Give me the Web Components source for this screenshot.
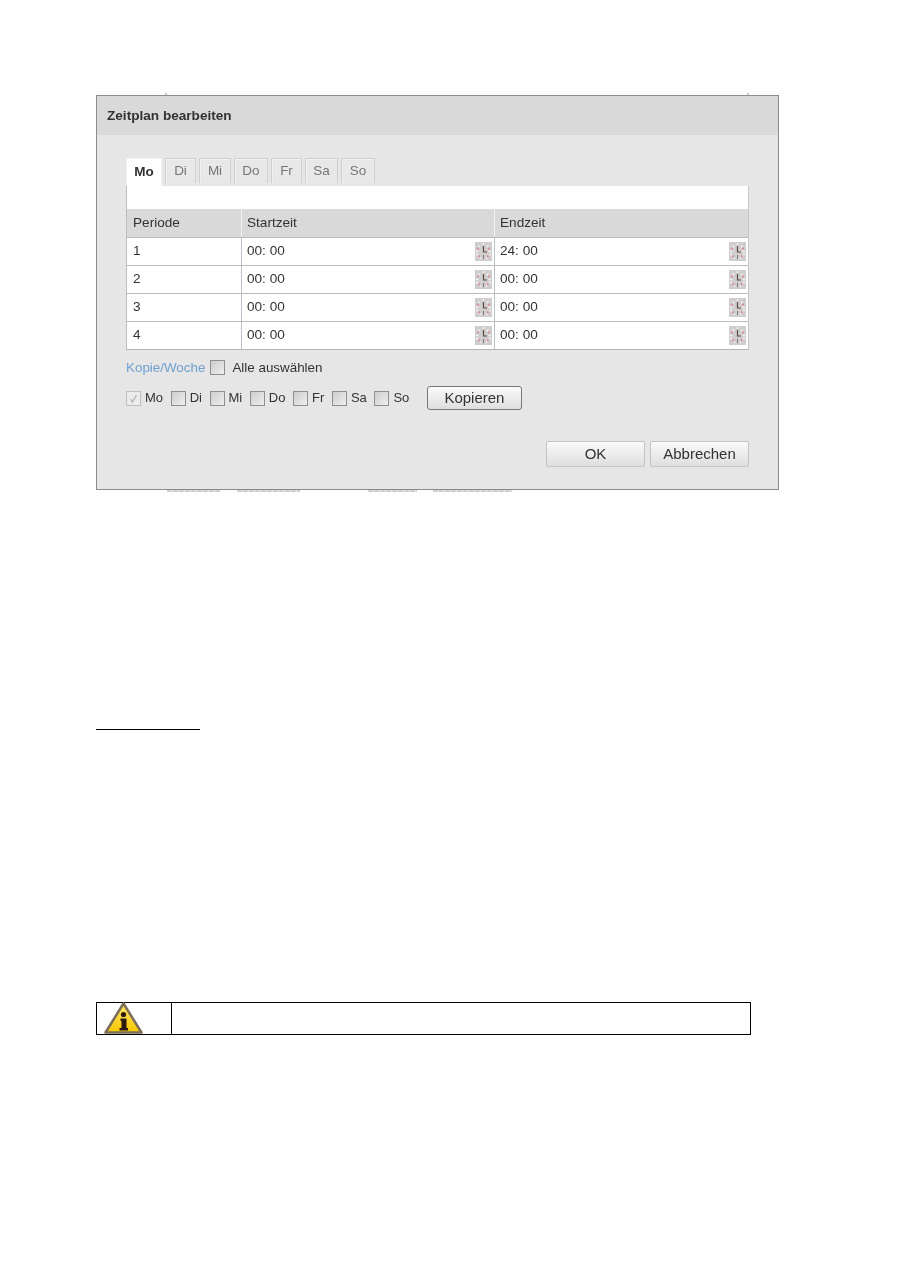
<!DOCTYPE html>
<html lang="de">
<head>
<meta charset="utf-8">
<title>Zeitplan bearbeiten</title>
<style>
    html, body{
        margin: 0;
        background: #fff;
    }
    body{
        width: 900px;
        height: 1273px;
        overflow: hidden;
        font-family: "Liberation Sans", Arial, sans-serif;
    }
</style>
</head>
<body>
<manual-page>
    <cut-marks data-spans="69:2,580:2" tone="#c9c9c9"></cut-marks>
    <schedule-dialog heading="Zeitplan bearbeiten"></schedule-dialog>
    <cut-marks data-spans="71:53,17:63,68:49,16:79" tone="#cfcfcf"></cut-marks>
    <section-rule></section-rule>
    <info-notice></info-notice>
</manual-page>

<script>
const pageTemplate = document.createElement("template");
pageTemplate.innerHTML = `
<style>
    :host{
        display: flex;
        flex-direction: column;
        align-items: flex-start;
        padding: 93px 0 0 96px;
    }
</style>
<slot></slot>
`;

class ManualPage extends HTMLElement{
    constructor(){
        super();
        this.attachShadow({mode: "open"});
        this.shadowRoot.appendChild(pageTemplate.content.cloneNode(true));
    }
}

// remains of the page text that the pasted dialog covers
class CutMarks extends HTMLElement{
    constructor(){
        super();
        this.attachShadow({mode: "open"});
        this.shadowRoot.innerHTML = `
<style>
    :host{
        display: flex;
        height: 2px;
    }
    i{
        display: block;
        height: 2px;
    }
</style>`;
    }
    connectedCallback(){
        const tone = this.getAttribute("tone");
        this.getAttribute("data-spans").split(",").forEach(s => {
            const [gap, width] = s.split(":");
            const mark = document.createElement("i");
            mark.style.marginLeft = gap + "px";
            mark.style.width = width + "px";
            mark.style.background = `repeating-linear-gradient(90deg, ${tone} 0 5px, #ececec 5px 6px)`;
            this.shadowRoot.appendChild(mark);
        });
    }
}

const clockTemplate = document.createElement("template");
clockTemplate.innerHTML = `
<style>
    :host{
        display: block;
        width: 17px;
        height: 19px;
        flex: none;
    }
    svg{
        display: block;
    }
</style>
<svg width="17" height="19" viewBox="0 0 17 19">
    <rect width="17" height="19" fill="#cfcdce"/>
    <path d="M8.500 1v2M3.500 3.500l1.500 1.500M13.500 3.500l-1.500 1.500M1 9.500h2.500M13.500 9.500h2.500" stroke="#f7f4f5" stroke-width="1.300" fill="none"/>
    <path d="M2 6.500h2M13 6.500h2M3.500 15l1.500-1.500M13.500 15l-1.500-1.500" stroke="#e0849a" stroke-width="1.300" fill="none"/>
    <path d="M1 12.500h2M14 12.500h2M5 17l1-1.500M12 17l-1-1.500" stroke="#f7f4f5" stroke-width="1.300" fill="none"/>
    <path d="M8.500 4v6h3.500" stroke="#5e4b42" stroke-width="1.200" fill="none"/>
    <path d="M8.500 13v4" stroke="#7f7679" stroke-width="1" fill="none"/>
</svg>
`;

class ClockIcon extends HTMLElement{
    constructor(){
        super();
        this.attachShadow({mode: "open"});
        this.shadowRoot.appendChild(clockTemplate.content.cloneNode(true));
    }
}

const checkTemplate = document.createElement("template");
checkTemplate.innerHTML = `
<style>
    :host{
        display: inline-flex;
        align-items: center;
        gap: 4px;
        font-size: 13px;
        color: #333;
    }
    i{
        display: block;
        width: 13px;
        height: 13px;
        border: 1px solid #8f8f8f;
        background: linear-gradient(135deg, #cdcdcd, #efefef);
    }
    span{
        margin-bottom: var(--lift, 0);
    }
    svg{
        display: none;
    }
    :host([checked]) i{
        border-color: #c0c0c0;
        background: #ececec;
    }
    :host([checked]) svg{
        display: block;
    }
</style>
<i><svg width="13" height="13" viewBox="0 0 13 13"><path d="M3.500 7l2 3 4-7" stroke="#b0b0b0" stroke-width="1.200" fill="none"/></svg></i>
<span><slot></slot></span>
`;

class DayCheck extends HTMLElement{
    constructor(){
        super();
        this.attachShadow({mode: "open"});
        this.shadowRoot.appendChild(checkTemplate.content.cloneNode(true));
    }
}

const buttonTemplate = document.createElement("template");
buttonTemplate.innerHTML = `
<style>
    :host{
        display: flex;
        align-items: center;
        justify-content: center;
        box-sizing: border-box;
        height: 26px;
        padding-bottom: 2px;
        font-size: 15px;
        color: #333;
        border: 1px solid #c4c4c4;
        border-radius: 2px;
        background: linear-gradient(#fafafa, #dedede);
    }
    :host([dark]){
        height: 24px;
        border-color: #777;
        border-radius: 3px;
    }
</style>
<slot></slot>
`;

class DialogButton extends HTMLElement{
    constructor(){
        super();
        this.attachShadow({mode: "open"});
        this.shadowRoot.appendChild(buttonTemplate.content.cloneNode(true));
    }
}

const tabsTemplate = document.createElement("template");
tabsTemplate.innerHTML = `
<style>
    :host{
        display: flex;
        gap: 3px;
        box-sizing: border-box;
        height: 29px;
        padding-top: 1px;
        font-size: 13.500px;
    }
    span{
        box-sizing: border-box;
        height: 25px;
        padding-top: 4px;
        text-align: center;
        color: #777;
        border: 1px solid #cfcfcf;
        border-bottom: none;
        background: #e8e8e8;
        box-shadow: inset 1px 1px 0 #f1f1f1;
    }
    span.on{
        height: 28px;
        padding-top: 5px;
        color: #333;
        font-weight: bold;
        background: #fff;
        border-color: #f2f2f2;
        box-shadow: none;
    }
</style>
`;

class DayTabs extends HTMLElement{
    constructor(){
        super();
        this.attachShadow({mode: "open"});
        this.shadowRoot.appendChild(tabsTemplate.content.cloneNode(true));
    }
    connectedCallback(){
        const days = [["Mo", 36], ["Di", 31], ["Mi", 32], ["Do", 34], ["Fr", 31], ["Sa", 33], ["So", 34]];
        days.forEach(([name, width], i) => {
            const tab = document.createElement("span");
            tab.textContent = name;
            tab.style.width = width + "px";
            if(i === 0){
                tab.className = "on";
            }
            this.shadowRoot.appendChild(tab);
        });
    }
}

const tableTemplate = document.createElement("template");
tableTemplate.innerHTML = `
<style>
    :host{
        display: block;
        box-sizing: border-box;
        width: 623px;
        font-size: 13.600px;
        color: #333;
        background: #fff;
        padding-top: 23px;
        border-right: 1px solid #c6c6c6;
        border-left: 1px solid #bdbdbd;
        border-bottom: 1px solid #b5b5b5;
    }
    .row{
        display: grid;
        grid-template-columns: 114px 253px 1fr;
        height: 28px;
        box-sizing: border-box;
        border-bottom: 1px solid #bcbcbc;
    }
    .row:last-child{
        border-bottom: none;
        height: 27px;
    }
    .row.head{
        height: 29px;
        background: #d9d9d9;
    }
    .row > div{
        display: flex;
        align-items: center;
        justify-content: space-between;
        padding: 0 2px 0 5px;
        border-left: 1px solid #bcc0c8;
    }
    .row > div:first-child{
        padding-left: 6px;
        border-left: none;
    }
    .row.head > div{
        border-left-color: #f2f2f2;
    }
    span{
        margin-bottom: 3px;
    }
    .row.head span{
        margin-bottom: 2px;
    }
</style>
<div class="row head"><div><span>Periode</span></div><div><span>Startzeit</span></div><div><span>Endzeit</span></div></div>
`;

class ScheduleTable extends HTMLElement{
    constructor(){
        super();
        this.attachShadow({mode: "open"});
        this.shadowRoot.appendChild(tableTemplate.content.cloneNode(true));
    }
    connectedCallback(){
        const rows = [["1", "00: 00", "24: 00"], ["2", "00: 00", "00: 00"], ["3", "00: 00", "00: 00"], ["4", "00: 00", "00: 00"]];
        rows.forEach(r => {
            const row = document.createElement("div");
            row.className = "row";
            row.innerHTML = `<div><span>${r[0]}</span></div>
                <div><span>${r[1]}</span><clock-icon></clock-icon></div>
                <div><span>${r[2]}</span><clock-icon></clock-icon></div>`;
            this.shadowRoot.appendChild(row);
        });
    }
}

const dialogTemplate = document.createElement("template");
dialogTemplate.innerHTML = `
<style>
    :host{
        display: block;
        box-sizing: border-box;
        width: 683px;
        height: 395px;
        border: 1px solid #8c8c8c;
        background: #e6e6e6;
        filter: blur(.4px);
    }
    header{
        height: 39px;
        box-sizing: border-box;
        padding: 12px 0 0 10px;
        font-size: 13.600px;
        font-weight: bold;
        color: #333;
        background: #d9d9d9;
    }
    .body{
        display: flex;
        flex-direction: column;
        padding: 22px 0 0 29px;
    }
    .all{
        display: flex;
        align-items: center;
        height: 16px;
        margin-top: 9px;
        font-size: 13.400px;
    }
    .all b{
        font-weight: normal;
        color: #6f9fd0;
        margin-right: 5px;
    }
    .all day-check{
        gap: 7px;
        font-size: 13.400px;
    }
    .days{
        display: flex;
        align-items: center;
        gap: 7.600px;
        height: 24px;
        margin-top: 11px;
    }
    .days day-check{
        --lift: 2px;
    }
    .days dialog-button{
        width: 95px;
        margin-left: 10px;
    }
    .actions{
        display: flex;
        justify-content: flex-end;
        gap: 5px;
        width: 623px;
        margin-top: 31px;
    }
    .actions dialog-button{
        width: 99px;
    }
</style>
<header></header>
<div class="body">
    <day-tabs></day-tabs>
    <schedule-table></schedule-table>
    <div class="all"><b>Kopie/Woche</b><day-check>Alle auswählen</day-check></div>
    <div class="days">
        <day-check checked>Mo</day-check>
        <day-check>Di</day-check>
        <day-check>Mi</day-check>
        <day-check>Do</day-check>
        <day-check>Fr</day-check>
        <day-check>Sa</day-check>
        <day-check>So</day-check>
        <dialog-button dark>Kopieren</dialog-button>
    </div>
    <div class="actions">
        <dialog-button>OK</dialog-button>
        <dialog-button>Abbrechen</dialog-button>
    </div>
</div>
`;

class ScheduleDialog extends HTMLElement{
    constructor(){
        super();
        this.attachShadow({mode: "open"});
        this.shadowRoot.appendChild(dialogTemplate.content.cloneNode(true));
    }
    connectedCallback(){
        this.shadowRoot.querySelector("header").textContent = this.getAttribute("heading");
    }
}

const ruleTemplate = document.createElement("template");
ruleTemplate.innerHTML = `
<style>
    :host{
        display: block;
        width: 104px;
        height: 1px;
        margin-top: 237px;
        background: #000;
    }
</style>
`;

class SectionRule extends HTMLElement{
    constructor(){
        super();
        this.attachShadow({mode: "open"});
        this.shadowRoot.appendChild(ruleTemplate.content.cloneNode(true));
    }
}

const noticeTemplate = document.createElement("template");
noticeTemplate.innerHTML = `
<style>
    :host{
        display: grid;
        grid-template-columns: 75px 1fr;
        grid-template-rows: 31px;
        box-sizing: border-box;
        width: 655px;
        height: 33px;
        margin-top: 272px;
        border: 1px solid #000;
    }
    div{
        border-right: 1px solid #000;
    }
    svg{
        display: block;
        margin-left: 7px;
        overflow: visible;
    }
</style>
<div>
    <svg width="40" height="31" viewBox="0 0 40 31">
        <defs>
            <linearGradient id="warn" x1="0" y1="0" x2="0" y2="1">
                <stop offset="0" stop-color="#ffe86a"/>
                <stop offset="1" stop-color="#f7c600"/>
            </linearGradient>
        </defs>
        <path d="M19.500 .500L37.500 29.500H1.500Z" fill="url(#warn)" stroke="#7a6e58" stroke-width="2.500" stroke-linejoin="round"/>
        <circle cx="19.500" cy="11.500" r="2.600" fill="#2a1a10"/>
        <path d="M16.500 15.500h6v9.500h1.500v2.500h-8.500V25h2v-7h-1z" fill="#2a1a10"/>
    </svg>
</div>
<span></span>
`;

class InfoNotice extends HTMLElement{
    constructor(){
        super();
        this.attachShadow({mode: "open"});
        this.shadowRoot.appendChild(noticeTemplate.content.cloneNode(true));
    }
}

customElements.define("manual-page", ManualPage);
customElements.define("cut-marks", CutMarks);
customElements.define("clock-icon", ClockIcon);
customElements.define("day-check", DayCheck);
customElements.define("dialog-button", DialogButton);
customElements.define("day-tabs", DayTabs);
customElements.define("schedule-table", ScheduleTable);
customElements.define("schedule-dialog", ScheduleDialog);
customElements.define("section-rule", SectionRule);
customElements.define("info-notice", InfoNotice);
</script>
</body>
</html>
